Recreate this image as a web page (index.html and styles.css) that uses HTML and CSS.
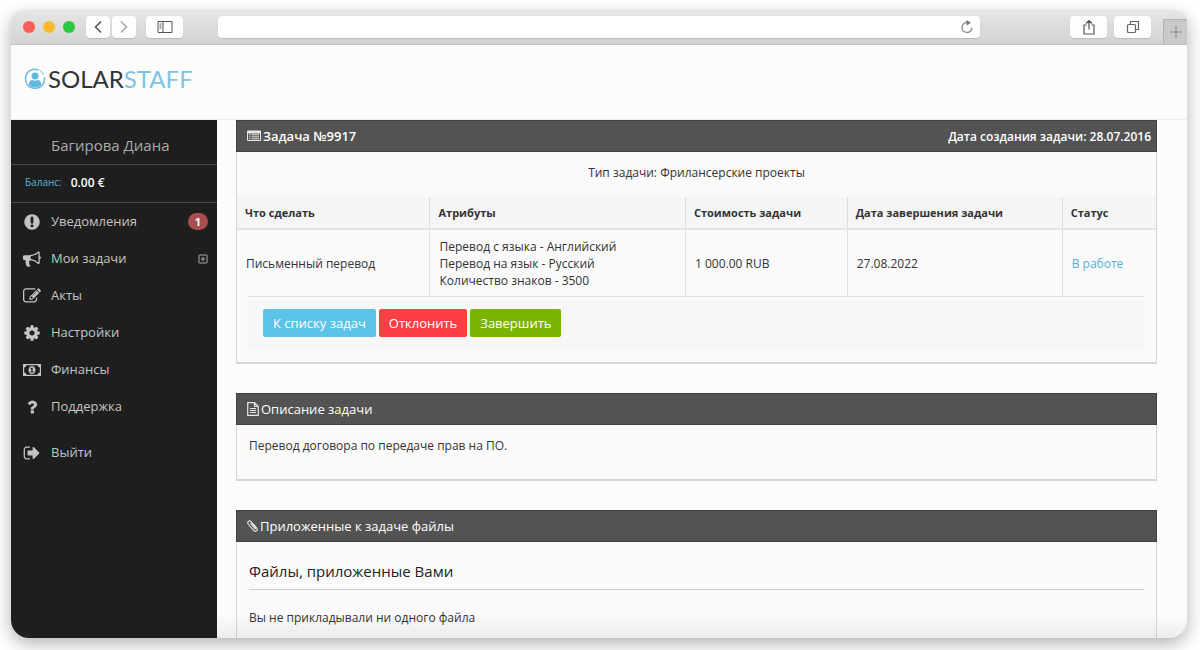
FILE: index.html
```html
<!DOCTYPE html>
<html lang="ru">
<head>
    <meta charset="UTF-8">
    <title>Solar Staff - Задача №9917</title>
    <link rel="stylesheet" href="styles.css">
</head>
<body>
    <div class="window">
        <div class="toolbar">
            <span class="dot red"></span>
            <span class="dot yellow"></span>
            <span class="dot green"></span>
            <div class="history">
                <button class="tool small" aria-label="Назад"><svg width="10" height="14" viewBox="0 0 10 14"><path d="M8 1.5L2.500 7L8 12.500" fill="none" stroke="#555" stroke-width="1.600"/></svg></button>
                <button class="tool small" aria-label="Вперёд"><svg width="10" height="14" viewBox="0 0 10 14"><path d="M2 1.500L7.500 7L2 12.500" fill="none" stroke="#aaa" stroke-width="1.600"/></svg></button>
            </div>
            <button class="tool" aria-label="Боковая панель"><svg width="16" height="14" viewBox="0 0 16 14"><path d="M1 1.500h14v11H1zM6 1.500v11M2.500 4h2M2.500 6h2M2.500 8h2" fill="none" stroke="#555"/></svg></button>
            <div class="address">
                <input type="text" aria-label="Адрес">
                <button class="reload" aria-label="Обновить"><svg width="14" height="14" viewBox="0 0 14 14"><path d="M7.500 2.500A5 5 0 1 0 12 7.500" fill="none" stroke="#888" stroke-width="1.300"/><path d="M6.500 0L11 2.700L6.500 5.500z" fill="#777"/></svg></button>
            </div>
            <div class="tools-right">
                <button class="tool" aria-label="Поделиться"><svg width="14" height="16" viewBox="0 0 14 16"><path d="M4.500 6H2v9h10V6H9.500M7 10.500V1.500M4 4.500l3-3 3 3" fill="none" stroke="#555" stroke-width="1.200"/></svg></button>
                <button class="tool" aria-label="Вкладки"><svg width="14" height="14" viewBox="0 0 14 14"><rect x="1.500" y="4.500" width="8" height="8" rx="1" fill="none" stroke="#666" stroke-width="1.200"/><path d="M4.500 4.500v-3h8v8h-3" fill="none" stroke="#666" stroke-width="1.200"/></svg></button>
            </div>
            <button class="new-tab" aria-label="Новая вкладка"><svg width="12" height="12" viewBox="0 0 12 12"><path d="M6 .5v11M.5 6h11" stroke="#888" stroke-width="1.200"/></svg></button>
        </div>

        <header class="header">
            <a href="#" class="logo">
                <svg width="22" height="22" viewBox="0 0 22 22"><path d="M14.500 2A9.500 9.500 0 1 0 20.400 9.500" fill="none" stroke="#6ab9dc" stroke-width="1.500"/><path d="M15.500 2.400a9.500 9.500 0 0 1 4.400 5" fill="none" stroke="#a9d7eb" stroke-width="1.200"/><circle cx="11" cy="8" r="3.500" fill="#62b8de"/><path d="M5 17v-1.500c0-2.500 2-3.500 3.500-3.500 1.500 1 3.500 1 5 0 1.500 0 3.500 1 3.500 3.500V17c-3.500 3-8.500 3-12 0z" fill="#62b8de"/></svg>
                <span class="logo-text">SOLAR<span>STAFF</span></span>
            </a>
        </header>

        <div class="page">
            <aside class="sidebar">
                <div class="user">Багирова Диана</div>
                <div class="balance"><span>Баланс:</span><b>0.00 €</b></div>
                <nav class="menu">
                    <a href="#">
                        <svg viewBox="0 0 1792 1792"><path d="M896 128q209 0 385.500 103t279.500 279.500 103 385.500-103 385.500-279.500 279.500-385.500 103-385.500-103-279.500-279.500-103-385.500 103-385.500 279.500-279.500 385.500-103zm128 1247v-190q0-14-9-23.500t-22-9.500h-192q-13 0-23 10t-10 23v190q0 13 10 23t23 10h192q13 0 22-9.500t9-23.500zm-2-344l18-621q0-12-10-18-10-8-24-8h-220q-14 0-24 8-10 6-10 18l17 621q0 10 10 17.500t24 7.500h185q14 0 23.500-7.500t10.500-17.500z"/></svg>
                        Уведомления <span class="badge">1</span>
                    </a>
                    <a href="#">
                        <svg viewBox="0 0 1792 1792"><path d="M1664 640q53 0 90.500 37.500t37.500 90.500-37.500 90.500-90.500 37.500v384q0 52-38 90t-90 38q-417-347-812-380-58 19-91 66t-31 100.500 40 92.500q-20 33-23 65.500t6 58 33.500 55 48 50 61.500 50.500q-29 58-111.500 83t-168.500 11.500-132-55.500q-7-23-29.500-87.500t-32-94.500-23-89-15-101 3.500-98.500 22-110.500h-122q-66 0-113-47t-47-113v-192q0-66 47-113t113-47h480q435 0 896-384 52 0 90 38t38 90v384zm-128 604v-954q-394 302-768 343v270q377 42 768 341z"/></svg>
                        Мои задачи
                        <svg class="plus" viewBox="0 0 10 10"><path d="M1 1.500q0-.5.5-.5h7q.5 0 .5.500v7q0 .5-.5.500h-7q-.5 0-.5-.5zM5 2.800v4.400M2.800 5h4.400"/></svg>
                    </a>
                    <a href="#">
                        <svg viewBox="0 0 1792 1792"><path d="M888 1184l116-116-152-152-116 116v56h96v96h56zm440-720q-16-16-33 1l-350 350q-17 17-1 33t33-1l350-350q17-17 1-33zm80 594v190q0 119-84.500 203.500t-203.500 84.500h-832q-119 0-203.500-84.500t-84.500-203.500v-832q0-119 84.500-203.500t203.500-84.500h832q63 0 117 25 15 7 18 23 3 17-9 29l-49 49q-14 14-32 8-23-6-45-6h-832q-66 0-113 47t-47 113v832q0 66 47 113t113 47h832q66 0 113-47t47-113v-126q0-13 9-22l64-64q15-15 35-7t20 29zm-96-738l288 288-672 672h-288v-288zm444 132l-92 92-288-288 92-92q28-28 68-28t68 28l152 152q28 28 28 68t-28 68z"/></svg>
                        Акты
                    </a>
                    <a href="#">
                        <svg viewBox="0 0 1792 1792"><path d="M1152 896q0-106-75-181t-181-75-181 75-75 181 75 181 181 75 181-75 75-181zm512-109v222q0 12-8 23t-20 13l-185 28q-19 54-39 91 35 50 107 138 10 12 10 25t-9 23q-27 37-99 108t-94 71q-12 0-26-9l-138-108q-44 23-91 38-16 136-29 186-7 28-36 28h-222q-14 0-24.500-8.500t-11.500-21.500l-28-184q-49-16-90-37l-141 107q-10 9-25 9-14 0-25-11-126-114-165-168-7-10-7-23 0-12 8-23 15-21 51-66.500t54-70.500q-27-50-41-99l-183-27q-13-2-21-12.500t-8-23.500v-222q0-12 8-23t19-13l186-28q14-46 39-92-40-57-107-138-10-12-10-24 0-10 9-23 26-36 98.500-107.500t94.500-71.500q13 0 26 10l138 107q44-23 91-38 16-136 29-186 7-28 36-28h222q14 0 24.500 8.500t11.500 21.500l28 184q49 16 90 37l142-107q9-9 24-9 13 0 25 10 129 119 165 170 7 8 7 22 0 12-8 23-15 21-51 66.500t-54 70.500q26 50 41 98l183 28q13 2 21 12.500t8 23.500z"/></svg>
                        Настройки
                    </a>
                    <a href="#">
                        <svg viewBox="0 0 18 18"><path fill-rule="evenodd" d="M0 3h18v12H0zM3.500 4.200Q3.300 6.300 1.200 6.500v5q2.100.2 2.300 2.300h11q.2-2.100 2.300-2.300v-5q-2.100-.2-2.300-2.300z"/><path fill-rule="evenodd" d="M9 5c2.200 0 3.500 1.800 3.500 4s-1.300 4-3.500 4-3.500-1.800-3.500-4S6.800 5 9 5zM8.700 6.500L7.300 7.800l.6.700.5-.4v2.500h-.9v.9h3v-.9h-.9V6.500z"/></svg>
                        Финансы
                    </a>
                    <a href="#">
                        <svg viewBox="0 0 1792 1792"><path d="M1088 1256v240q0 16-12 28t-28 12h-240q-16 0-28-12t-12-28v-240q0-16 12-28t28-12h240q16 0 28 12t12 28zm316-600q0 54-15.500 101t-35 76.500-55 59.500-57.500 43.500-61 35.500q-41 23-68.500 65t-27.500 67q0 17-12 32.500t-28 15.500h-240q-15 0-25.500-18.500t-10.500-37.500v-45q0-83 65-156.500t143-108.500q59-27 84-56t25-76q0-42-46.500-74t-107.500-32q-65 0-108 29-35 25-107 115-13 16-31 16-12 0-25-8l-164-125q-13-10-15.500-25t5.500-28q160-266 464-266 80 0 161 31t146 83 106 127.500 41 158.500z"/></svg>
                        Поддержка
                    </a>
                    <a href="#" class="logout">
                        <svg viewBox="0 0 1792 1792"><path d="M704 1440q0 4 1 20t.5 26.500-3 23.500-10 19.500-20.500 6.500h-320q-119 0-203.500-84.500t-84.500-203.500v-704q0-119 84.500-203.500t203.500-84.500h320q13 0 22.500 9.500t9.500 22.500q0 4 1 20t.5 26.500-3 23.500-10 19.500-20.500 6.500h-320q-66 0-113 47t-47 113v704q0 66 47 113t113 47h312l11.500 1 11.500 3 8 5.500 7 9 2 13.500zm928-544q0 26-19 45l-544 544q-19 19-45 19t-45-19-19-45v-288h-448q-26 0-45-19t-19-45v-384q0-26 19-45t45-19h448v-288q0-26 19-45t45-19 45 19l544 544q19 19 19 45z"/></svg>
                        Выйти
                    </a>
                </nav>
            </aside>

            <main class="content">
                <section class="panel">
                    <div class="panel-title main-title">
                        <svg width="14" height="14" viewBox="0 0 14 14"><path fill="#e6e6e6" fill-rule="evenodd" d="M1 1.500h12q1 0 1 1v8.500q0 1-1 1H1q-1 0-1-1V2.500q0-1 1-1zM1 4.500V11h12V4.500z"/><path d="M2 5.800h1.500M2 7.800h1.500M2 9.800h1.500M4.500 5.800H12M4.500 7.800H12M4.500 9.800H12" stroke="#e6e6e6"/></svg>
                        <h2>Задача №9917</h2>
                        <span class="created">Дата создания задачи: 28.07.2016</span>
                    </div>
                    <p class="task-type">Тип задачи: Фрилансерские проекты</p>
                    <table class="task">
                        <colgroup><col class="c-what"><col class="c-attr"><col class="c-cost"><col class="c-date"><col></colgroup>
                        <thead>
                            <tr><th>Что сделать</th><th>Атрибуты</th><th>Стоимость задачи</th><th>Дата завершения задачи</th><th>Статус</th></tr>
                        </thead>
                        <tbody>
                            <tr>
                                <td>Письменный перевод</td>
                                <td>Перевод с языка - Английский<br>Перевод на язык - Русский<br>Количество знаков - 3500</td>
                                <td>1 000.00 RUB</td>
                                <td>27.08.2022</td>
                                <td class="status">В работе</td>
                            </tr>
                        </tbody>
                    </table>
                    <div class="actions">
                        <button class="btn blue">К списку задач</button>
                        <button class="btn decline">Отклонить</button>
                        <button class="btn finish">Завершить</button>
                    </div>
                </section>

                <section class="panel">
                    <div class="panel-title">
                        <svg width="12" height="14" viewBox="0 0 12 14"><path d="M.7.700h6.800l3.800 3.800v8.800H.7zM7.500.700v3.800h3.800M3 6.500h6M3 8.500h6M3 10.500h6" fill="none" stroke="#e6e6e6" stroke-width="1.200"/></svg>
                        <h2>Описание задачи</h2>
                    </div>
                    <p class="description">Перевод договора по передаче прав на ПО.</p>
                </section>

                <section class="panel">
                    <div class="panel-title">
                        <svg width="11" height="14" viewBox="0 0 11 14"><path d="M3.500 4.200l4.300 5.200c.5.700 1.500-.1 1-.8L4 2.600C2.500.8-.4 3 1.200 5l5.300 6.400c2 2.200 4.900-.2 3.200-2.400L6 4.500" fill="none" stroke="#e6e6e6" stroke-width="1.100"/></svg>
                        <h2>Приложенные к задаче файлы</h2>
                    </div>
                    <div class="files">
                        <h3>Файлы, приложенные Вами</h3>
                        <p>Вы не прикладывали ни одного файла</p>
                    </div>
                </section>
            </main>
        </div>
    </div>
</body>
</html>
```

FILE: styles.css
```css
* {
    box-sizing: border-box;
}
body {
    font-family: "Open Sans", "Noto Sans", sans-serif;
    font-size: 12px;
    line-height: 17px;
    color: #333;
    background-color: #fff;
    margin: 0;
    padding: 10px 13px 12px 11px;
    height: 100vh;
    overflow: hidden;
}
h2, h3, p {
    margin: 0;
}
button, input {
    font-family: inherit;
    border: 0;
    padding: 0;
}
a {
    text-decoration: none;
}

/* browser window */
.window {
    height: 100%;
    display: flex;
    flex-direction: column;
    background-color: #fcfcfc;
    border-radius: 12px 12px 18px 18px;
    overflow: hidden;
    box-shadow: 0 6px 18px rgba(0, 0, 0, 0.3);
}
.toolbar {
    flex: none;
    height: 35px;
    display: flex;
    align-items: center;
    padding-left: 12px;
    background: linear-gradient(#e6e6e6, #d3d3d3);
    border-bottom: 1px solid #c4c4c4;
}
.dot {
    width: 12px;
    height: 12px;
    margin-right: 8px;
    border-radius: 50%;
}
.red {
    background-color: #f95e57;
}
.yellow {
    background-color: #fbbb2f;
}
.green {
    background-color: #2bc840;
}
.history {
    display: flex;
    gap: 2px;
    margin: 0 10px 0 3px;
}
.tool {
    width: 37px;
    height: 22px;
    display: flex;
    align-items: center;
    justify-content: center;
    background-color: #fdfdfd;
    border-radius: 4px;
    box-shadow: 0 1px 1px #bbb;
}
.small {
    width: 24px;
}
.address {
    flex: 1;
    height: 22px;
    margin: 0 90px 0 35px;
    padding-right: 6px;
    display: flex;
    align-items: center;
    background-color: #fff;
    border-radius: 4px;
    box-shadow: 0 1px 1px #bbb;
}
.address input {
    flex: 1;
    background: none;
}
.reload {
    display: flex;
    background: none;
}
.tools-right {
    display: flex;
    gap: 7px;
    margin-right: 12px;
}
.new-tab {
    width: 24px;
    height: 25px;
    align-self: flex-end;
    display: flex;
    align-items: center;
    justify-content: center;
    background-color: #c9c9c9;
    border: 1px solid #b2b2b2;
    border-width: 1px 0 0 1px;
}

/* site header */
.header {
    flex: none;
    height: 75px;
    padding: 21px 13px;
    border-bottom: 1px solid #ececec;
}
.logo {
    display: flex;
    align-items: center;
    gap: 2px;
}
.logo-text {
    font-family: Lato, sans-serif;
    font-size: 24px;
    line-height: 26px;
    color: #333;
}
.logo-text span {
    color: #7cc4e4;
}

.page {
    flex: 1;
    min-height: 0;
    display: flex;
}

/* left menu */
.sidebar {
    flex: none;
    width: 206px;
    background-color: #1e1e1e;
    color: #c4c4c4;
}
.user {
    height: 45px;
    padding: 15px 40px 0;
    font-size: 15px;
    line-height: 20px;
    color: #aaa;
    border-bottom: 1px solid #484848;
}
.balance {
    height: 38px;
    display: flex;
    align-items: center;
    gap: 9px;
    padding: 0 14px 2px;
    border-bottom: 1px solid #484848;
}
.balance span {
    font-size: 10px;
    color: #5ab4d8;
}
.balance b {
    font-size: 12px;
    font-weight: 600;
    color: #fff;
}
.menu a {
    height: 37px;
    display: flex;
    align-items: center;
    padding: 0 9px 0 12px;
    font-size: 13px;
    color: #c4c4c4;
}
.menu svg {
    width: 18px;
    height: 18px;
    margin-right: 10px;
    fill: #c4c4c4;
}
.menu .plus {
    width: 10px;
    height: 10px;
    margin: 0 0 0 auto;
    fill: none;
    stroke: #aaa;
}
.menu .logout {
    margin-top: 9px;
}
.badge {
    width: 20px;
    margin-left: auto;
    border-radius: 9px;
    background-color: #a94e4e;
    color: #fff;
    font-size: 11px;
    font-weight: 700;
    text-align: center;
}

/* task page */
.content {
    flex: 1;
    position: relative;
    overflow: hidden;
    padding: 0 30px 30px 19px;
}
/* fade at the bottom edge of the window */
.content::after {
    content: "";
    position: absolute;
    left: 0;
    right: 0;
    bottom: 0;
    height: 24px;
    background: linear-gradient(rgba(0, 0, 0, 0), rgba(0, 0, 0, 0.06));
    pointer-events: none;
}
.panel {
    margin-bottom: 29px;
    background-color: #fafafa;
    border: 1px solid #d6d6d6;
    border-width: 0 1px 2px;
}
.panel-title {
    height: 32px;
    margin: 0 -1px;
    padding: 0 5px 0 10px;
    display: flex;
    align-items: center;
    gap: 2px;
    background-color: #535353;
    border: 1px solid #404040;
    color: #fff;
}
.panel-title h2 {
    font-size: 13px;
    font-weight: 400;
}
.main-title h2 {
    font-weight: 600;
}
.created {
    margin-left: auto;
    font-weight: 600;
}
.task-type {
    padding: 12px 0 16px;
    text-align: center;
}
.task {
    width: 100%;
    table-layout: fixed;
    border-collapse: collapse;
}
.c-what {
    width: 21%;
}
.c-attr {
    width: 27.8%;
}
.c-cost {
    width: 17.6%;
}
.c-date {
    width: 23.4%;
}
.task th {
    height: 32px;
    padding: 0 8px;
    background-color: #f5f5f5;
    border-bottom: 2px solid #e2e2e2;
    font-size: 11px;
    text-align: left;
}
.task td {
    height: 67px;
    padding: 0 9px;
}
.task th + th, .task td + td {
    border-left: 1px solid #dedede;
}
.task .status {
    color: #51b3dd;
}
.actions {
    margin: 0 12px 12px 11px;
    padding: 12px 15px 13px;
    display: flex;
    gap: 3px;
    background-color: #f7f7f7;
    border-top: 1px solid #e2e2e2;
}
.btn {
    height: 28px;
    padding: 0 10px;
    border-radius: 2px;
    font-size: 13px;
    color: #fff;
}
.blue {
    background-color: #5bc3e6;
}
.decline {
    background-color: #fc3f44;
}
.finish {
    background-color: #79b500;
}
.description {
    padding: 12px 12px 25px;
}
.files {
    padding: 19px 12px;
}
.files h3 {
    margin-bottom: 19px;
    padding-bottom: 8px;
    font-size: 15px;
    font-weight: 400;
    line-height: 20px;
    color: #222;
    border-bottom: 1px solid #ccc;
}
```
